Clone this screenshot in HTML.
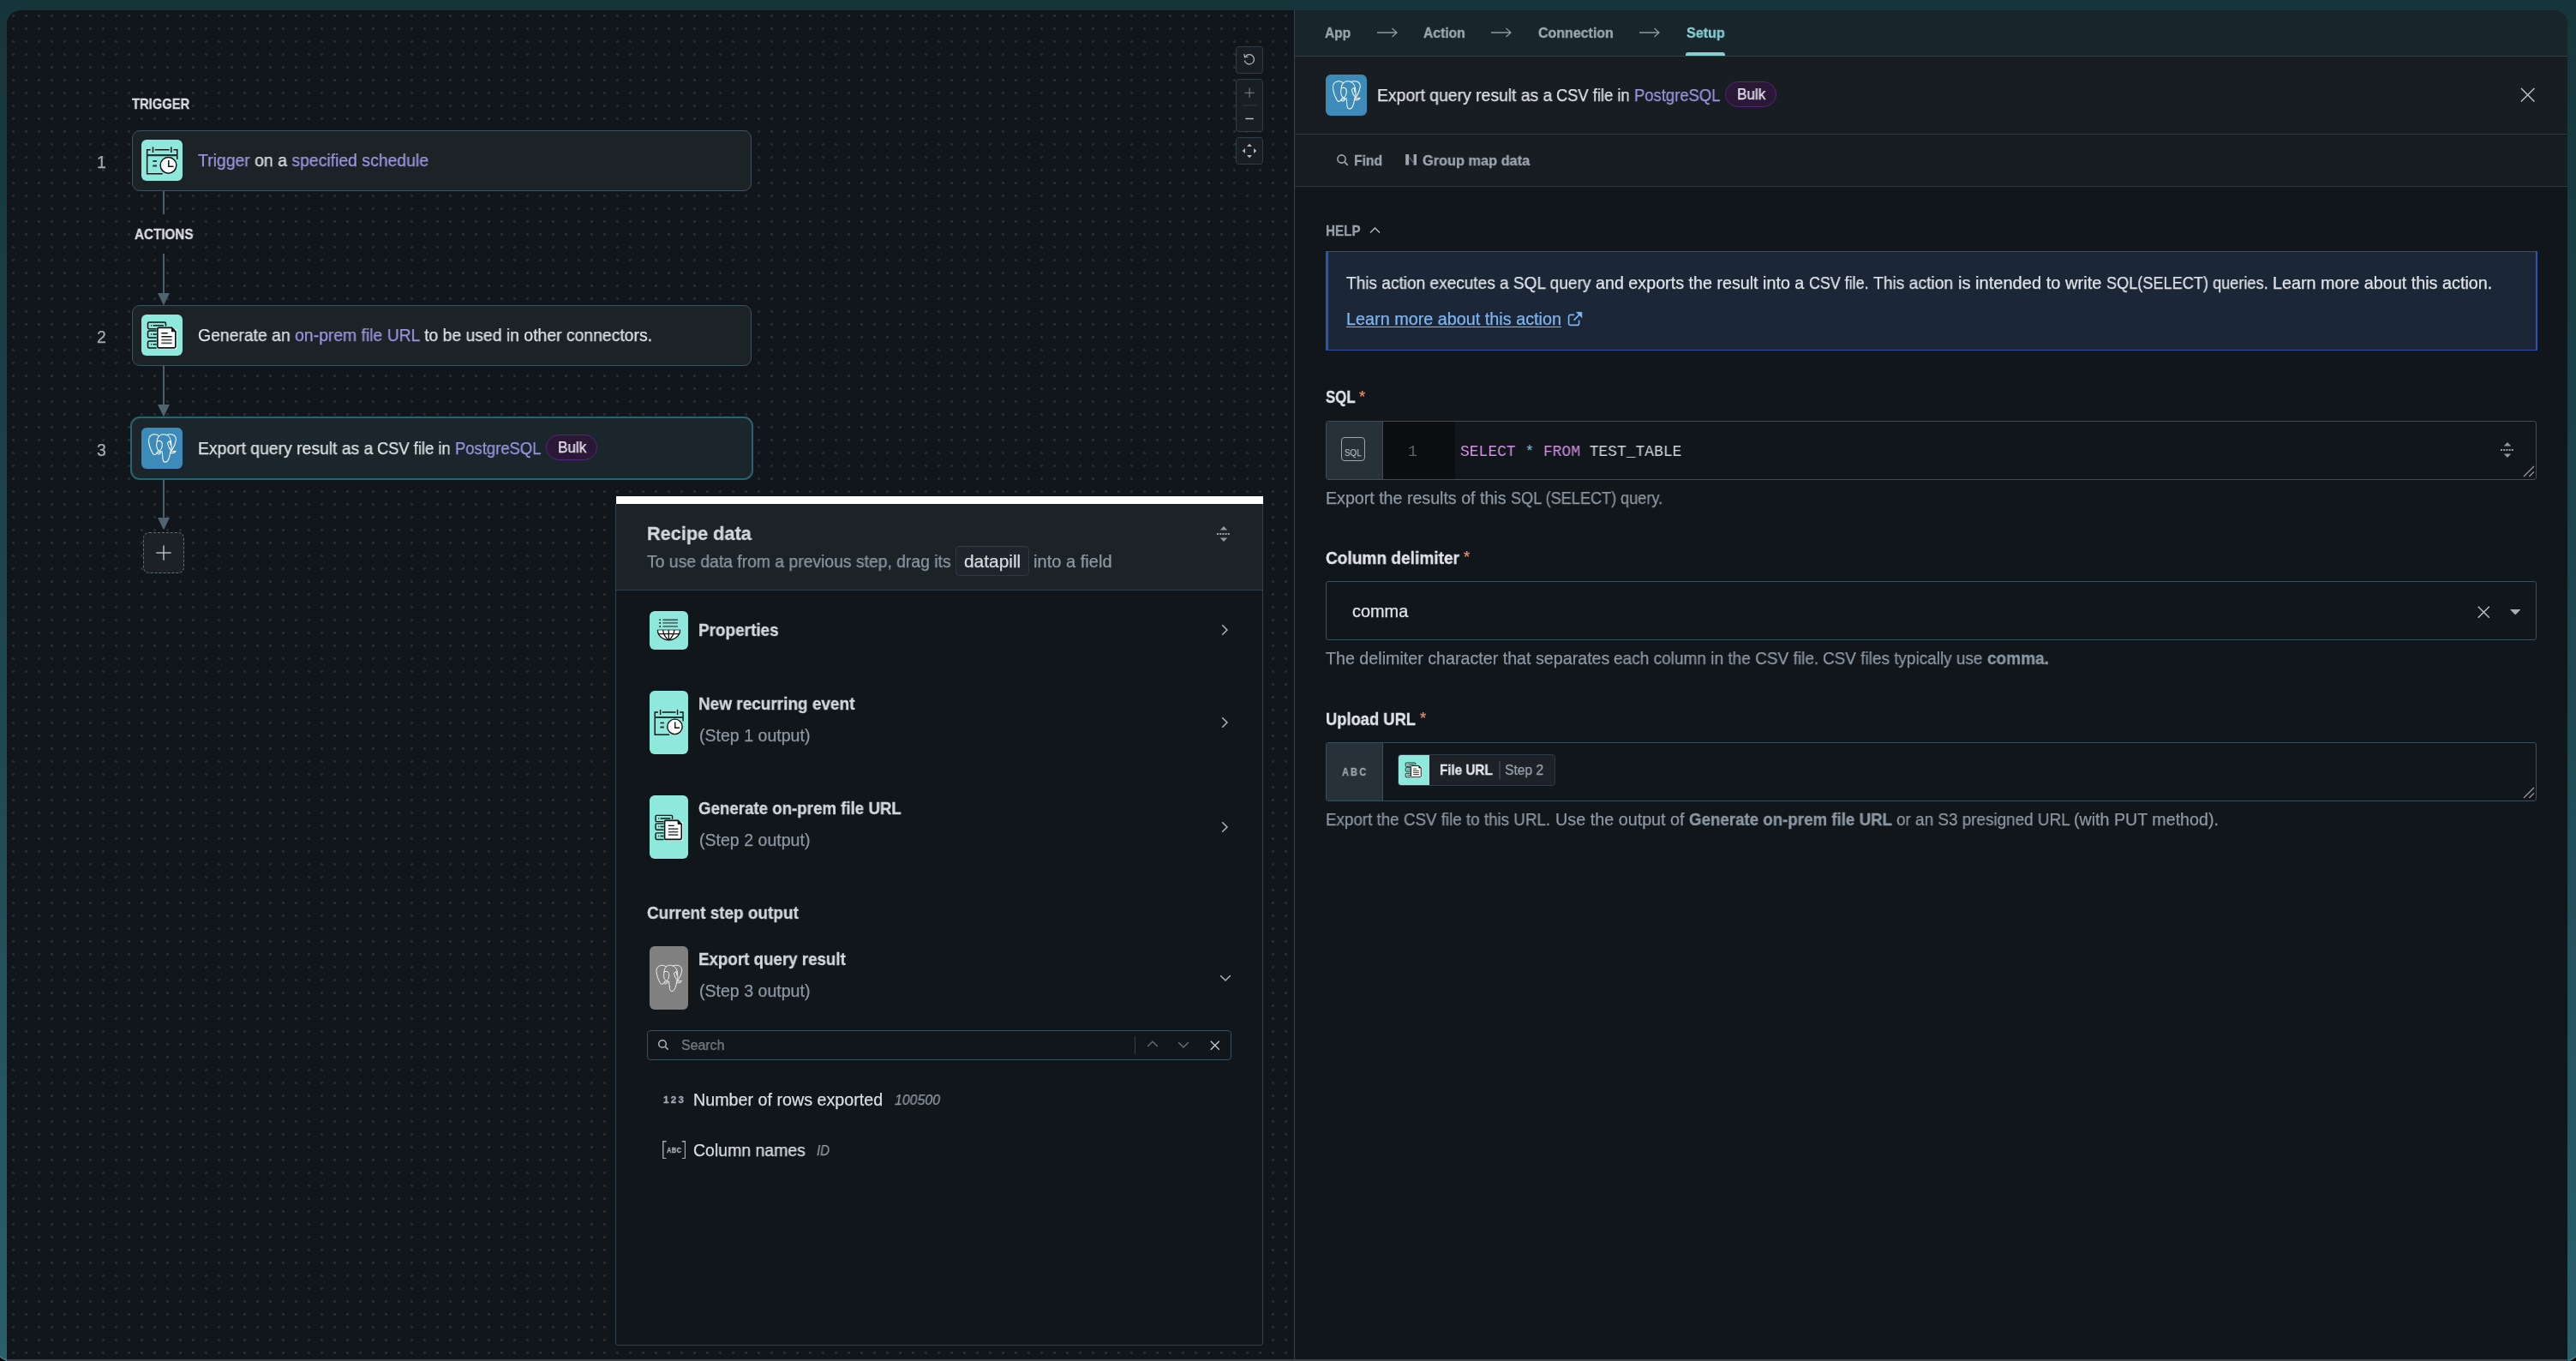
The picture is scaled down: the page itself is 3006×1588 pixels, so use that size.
<!DOCTYPE html>
<html lang="en"><head><meta charset="utf-8"><title>Recipe editor</title>
<style>
html,body{margin:0;padding:0}
body{width:3006px;height:1588px;overflow:hidden;position:relative;background:linear-gradient(180deg,#16353b 0%,#1f474f 50%,#2a5f6c 100%);font-family:"Liberation Sans", sans-serif;-webkit-font-smoothing:antialiased}
.app{position:absolute;left:8px;top:12px;width:2988px;height:1576px;border-radius:16px 16px 0 0;overflow:hidden;background-color:#11161a;
background-image:radial-gradient(circle at 7.5px 6.5px,#2a2e32 0,#2a2e32 1.15px,rgba(42,46,50,0) 1.9px);background-size:15px 15px;}
.app>div{position:absolute}
.t{position:absolute;line-height:0;white-space:nowrap;transform-origin:0 0;display:block;will-change:transform;-webkit-text-stroke:.25px}
.t.m{font-family:"Liberation Mono", monospace;-webkit-text-stroke:0}
.t b{font-weight:700;-webkit-text-stroke:.3px}
.t.b{-webkit-text-stroke:.3px}
svg{display:block}
.foot{position:absolute;left:8px;top:1586px;width:2988px;height:2px;background:#3d4246}
</style></head>
<body>
<div class="app"><div class="canvas" style="position:absolute;left:0.0px;top:0.0px;width:1502.0px;height:1574.0px;overflow:hidden;"><div style="position:absolute;left:182.0px;top:210.0px;width:2.0px;height:28.0px;background:#4b5e6b"></div><div style="position:absolute;left:182.0px;top:284.0px;width:2.0px;height:46.0px;background:#4b5e6b"></div><div style="position:absolute;left:182.0px;top:414.0px;width:2.0px;height:46.0px;background:#4b5e6b"></div><div style="position:absolute;left:182.0px;top:547.0px;width:2.0px;height:45.0px;background:#4b5e6b"></div><div style="position:absolute;left:175.8px;top:329.5px;width:14.0px;height:14.5px;"><svg viewBox="0 0 14 14.5" width="14" height="14.5"><path d="M0 0H14L7 14.5Z" fill="#4f6371"/></svg></div><div style="position:absolute;left:175.8px;top:459.5px;width:14.0px;height:14.5px;"><svg viewBox="0 0 14 14.5" width="14" height="14.5"><path d="M0 0H14L7 14.5Z" fill="#4f6371"/></svg></div><div style="position:absolute;left:175.8px;top:591.5px;width:14.0px;height:14.5px;"><svg viewBox="0 0 14 14.5" width="14" height="14.5"><path d="M0 0H14L7 14.5Z" fill="#4f6371"/></svg></div><span class="t b" style="left:146.3px;top:109.8px;font-size:16.74px;font-weight:700;color:#d9dde2;transform:scaleX(0.8813);">TRIGGER</span><span class="t b" style="left:148.7px;top:261.8px;font-size:16.74px;font-weight:700;color:#d9dde2;transform:scaleX(0.9095);">ACTIONS</span><span class="t" style="left:105.2px;top:176.8px;font-size:19.53px;font-weight:400;color:#a3abb3;">1</span><span class="t" style="left:104.6px;top:381.2px;font-size:19.53px;font-weight:400;color:#a3abb3;">2</span><span class="t" style="left:104.8px;top:512.6px;font-size:19.53px;font-weight:400;color:#a3abb3;">3</span><div class="card" style="position:absolute;left:146.0px;top:140.0px;width:722.6px;height:70.5px;background:#1c2327;border:1px solid #40525f;border-radius:9px;box-sizing:border-box;"></div><div style="position:absolute;left:157.0px;top:151.0px;width:48.3px;height:48.3px;background:#8ee8dc;border-radius:6px;overflow:hidden"><svg viewBox="0 0 48 48" width="100%" height="100%" fill="none" stroke="#101313" stroke-width="1.5" stroke-linecap="butt"><path d="M10.6 11.7H6.6V39.6H24.5M15.6 11.7H32.4M37.3 11.7H41.5V22.8"/><path d="M13.4 8.5V15M34.6 8.5V15"/><path d="M6.6 18.1H41.5" stroke="#1d3632" stroke-width="2.2"/><path d="M13.2 24.9H17.9" /><path d="M13.2 30.3H17.9" stroke="#1d3632" stroke-width="2"/><circle cx="31.3" cy="29.6" r="9.3" fill="#fff"/><path d="M31.6 23.8V31H37.3"/></svg></div><span class="t" style="left:223.4px;top:174.8px;font-size:19.53px;font-weight:400;color:#dde1e6;transform:scaleX(0.9945);"><span style="color:#9a97e3">Trigger</span> on a <span style="color:#9a97e3">specified schedule</span></span><div class="card" style="position:absolute;left:146.0px;top:344.0px;width:722.6px;height:70.5px;background:#1c2327;border:1px solid #40525f;border-radius:9px;box-sizing:border-box;"></div><div style="position:absolute;left:157.0px;top:354.8px;width:48.3px;height:48.3px;background:#8ee8dc;border-radius:6px;overflow:hidden"><svg viewBox="0 0 48 48" width="100%" height="100%" fill="none" stroke="#101313" stroke-width="1.5"><path d="M17.5 16.6H9A1.5 1.5 0 0 1 7.5 15.1V10.4A1.5 1.5 0 0 1 9 8.9H26.8A1.5 1.5 0 0 1 28.3 10.4V13.5"/><path d="M13.4 12.7H25.8M10.9 12.7H11.9"/><path d="M17.5 19H9A1.5 1.5 0 0 0 7.5 20.5V25.3A1.5 1.5 0 0 0 9 26.8H17.5"/><path d="M13.4 22.9H17.5M10.9 22.9H11.9"/><path d="M17.5 30.7H9A1.5 1.5 0 0 0 7.5 32.2V37.3A1.5 1.5 0 0 0 9 38.8H17.5"/><path d="M13.4 34.6H17.5M10.9 34.6H11.9"/><rect x="21" y="17" width="20.2" height="23" fill="#fff" stroke="none"/><path d="M20.2 15.3H35.2L39.6 19.7V37.1A1.5 1.5 0 0 1 38.1 38.6H20.2A1.5 1.5 0 0 1 18.7 37.1V16.8A1.5 1.5 0 0 1 20.2 15.3Z" fill="#fff" stroke-width="1.7"/><path d="M35.2 15.3V19.7H39.6Z" fill="#101313" stroke-width="1"/><path d="M23.2 21.6H30.5M23.2 25.6H35.4"/><path d="M23.2 29.4H35.4M23.2 33.1H35.4" stroke="#555" stroke-width="1.8"/></svg></div><span class="t" style="left:223.4px;top:379.0px;font-size:19.53px;font-weight:400;color:#dde1e6;transform:scaleX(0.9923);">Generate an <span style="color:#9a97e3">on-prem file URL</span> to be used in other connectors.</span><div class="card sel" style="position:absolute;left:144.3px;top:473.5px;width:726.3px;height:74.0px;background:#1a262b;border:2.6px solid #276470;border-radius:11px;box-sizing:border-box;"></div><div style="position:absolute;left:157.0px;top:486.9px;width:48.3px;height:48.3px;background:#3d8bb9;border-radius:6px;overflow:hidden"><svg viewBox="0 0 48 48" width="100%" height="100%" fill="none" stroke="#fff" stroke-width="1.05" stroke-linecap="round" stroke-linejoin="round"><g transform="translate(0.49 0.45) scale(0.966)"><path d="M20.6 9.4C18.6 7.8 16.4 7.3 14.4 7.6C10.2 8.3 8 11.5 8.3 15.6C8.7 20.6 10.6 26.2 13.2 30.4C14.4 32.3 15.9 32.2 17 31.2L19.2 28.2"/><path d="M18.3 16C18.3 11 21.3 7.6 25.5 7.5C30.5 7.4 34.2 10.8 35 15.8C35.6 19.6 35.8 23 35.6 26.3L34.1 29.4C33.6 32 33.4 34.6 32.4 36.6C31.4 39.2 29.8 40.9 28 40.9C26.4 40.9 25.6 39.4 25.3 37.4C24.9 34.6 24.9 31.8 24.4 29.2"/><path d="M18.3 15.8C20 15.2 22.3 15.3 23.6 16.4C24.6 17.6 24.6 20.2 24.2 22.6C23.8 24.9 22.6 26.6 21.4 27.4C20.2 27.2 18.8 25.8 18.2 24C17.6 21.6 17.6 18.2 18.3 15.8Z"/><path d="M19 28.6C20.2 29.2 21.6 29.3 22.8 29C22.4 30.4 21.4 31.3 20 31.4C19 31.4 18.2 30.8 18 30"/><path d="M21.4 27.4C22.6 28.4 23.8 28.6 24.6 28.2"/><path d="M29.4 8.4C31.6 7.4 34.2 7.2 36.6 7.8C39.8 8.8 41.4 11.6 40.9 14.8C40.3 19 38.4 23 36.2 26.6"/><path d="M34.8 15.6C33 15.6 31.4 16.6 30.8 18C31.4 21.2 32.8 24.2 34.8 26.6"/><path d="M33.6 16.4C34.4 17.6 34.6 19 34.4 20.4"/><path d="M34.6 27.8C36.6 28.2 38.8 28.1 40.8 27.6C40.2 29 38.6 30 36.8 30.2C35.6 30.3 34.6 30 33.9 29.4"/></g></svg></div><span class="t" style="left:223.2px;top:510.8px;font-size:19.53px;font-weight:400;color:#dde1e6;transform:scaleX(0.9917);">Export query result as a</span><span class="t" style="left:432.2px;top:510.8px;font-size:19.53px;font-weight:400;color:#dde1e6;transform:scaleX(0.9395);">CSV file in</span><span class="t" style="left:523.0px;top:510.8px;font-size:19.53px;font-weight:400;color:#9a97e3;transform:scaleX(0.9444);">PostgreSQL</span><div class="pill" style="position:absolute;left:629.0px;top:495.0px;width:60.0px;height:30.0px;background:#2a1836;border:1px solid #54267a;border-radius:15px;box-sizing:border-box;"></div><span class="t" style="left:642.8px;top:510.1px;font-size:17.67px;font-weight:400;color:#e6e0ee;transform:scaleX(0.9721);">Bulk</span><div style="position:absolute;left:159.4px;top:609.0px;width:47.8px;height:47.8px;background:#1b2125;border:1px dashed #5b6f7d;border-radius:7px;box-sizing:border-box;"><svg viewBox="0 0 48 48" width="46" height="46"><path d="M24 15V33M15 24H33" stroke="#b3bac1" stroke-width="1.6" fill="none"/></svg></div><div style="position:absolute;left:1434.0px;top:42.0px;width:32.2px;height:32.0px;background:#181e22;border:1px solid #2f3f49;border-radius:4px;box-sizing:border-box;"><svg viewBox="0 0 32 32" width="30" height="30" style="position:absolute;left:0;top:0"><path d="M11.2 11.4A6 6 0 1 1 10 16.6" stroke="#b5bcc3" stroke-width="1.3" fill="none"/><path d="M9.6 8.6L10.2 12.6L14.2 12" stroke="#b5bcc3" stroke-width="1.3" fill="none"/></svg></div><div style="position:absolute;left:1434.0px;top:80.2px;width:32.2px;height:61.8px;background:#181e22;border:1px solid #2f3f49;border-radius:4px;box-sizing:border-box;"><svg viewBox="0 0 32 62" width="30.2" height="59.8" style="position:absolute;left:0;top:0"><path d="M16 9.5V21.5M10 15.5H22" stroke="#69747d" stroke-width="1.3" fill="none"/><path d="M7 31H25" stroke="#333f48" stroke-width="1"/><path d="M11 47.6H21" stroke="#b5bcc3" stroke-width="1.5" fill="none"/></svg></div><div style="position:absolute;left:1434.0px;top:148.2px;width:32.2px;height:32.0px;background:#181e22;border:1px solid #2f3f49;border-radius:4px;box-sizing:border-box;"><svg viewBox="0 0 32 32" width="30" height="30" style="position:absolute;left:0;top:0" fill="#b5bcc3"><path d="M16 7.2L19.2 10.6H12.8Z"/><path d="M16 24.8L19.2 21.4H12.8Z"/><path d="M7.2 16L10.6 12.8V19.2Z"/><path d="M24.8 16L21.4 12.8V19.2Z"/></svg></div><div class="recipe-data" style="position:absolute;left:710.0px;top:567.0px;width:756.0px;height:991.0px;background:#11161a;border-radius:0 0 4px 4px;"><div style="position:absolute;left:0.0px;top:9.0px;width:756.0px;height:982.0px;border:1px solid #33434d;border-top:none;border-radius:0 0 4px 4px;box-sizing:border-box;"></div><div style="position:absolute;left:1.0px;top:0.0px;width:754.6px;height:9.2px;background:#fff"></div><div class="rd-head" style="position:absolute;left:0.0px;top:9.0px;width:756.0px;height:101.0px;background:#1c2327;border-left:1px solid #33434d;border-right:1px solid #33434d;border-bottom:1px solid #2f3e48;box-sizing:border-box;"></div><span class="t b" style="left:37.4px;top:44.1px;font-size:22.32px;font-weight:700;color:#d3d8df;transform:scaleX(0.9725);">Recipe data</span><span class="t" style="left:37.4px;top:76.2px;font-size:19.53px;font-weight:400;color:#8b98a3;transform:scaleX(0.9905);">To use data from a previous step, drag its</span><div style="position:absolute;left:397.4px;top:58.2px;width:85.8px;height:34.4px;background:#1f252d;border:1px solid #2d3943;border-radius:4px;box-sizing:border-box;"></div><span class="t" style="left:406.8px;top:76.2px;font-size:19.53px;font-weight:400;color:#d5dae0;transform:scaleX(1.0702);">datapill</span><span class="t" style="left:488.2px;top:76.2px;font-size:19.53px;font-weight:400;color:#8b98a3;transform:scaleX(1.0296);">into a field</span><div style="position:absolute;left:701.0px;top:34.0px;width:18.0px;height:20.0px;"><svg viewBox="0 0 18 20" width="18" height="20"><path d="M9 1L13.2 5.4H4.8Z" fill="#8f9aa3"/><path d="M9 19L13.2 14.6H4.8Z" fill="#8f9aa3"/><path d="M1 10H17" stroke="#c9ced3" stroke-width="1.6" stroke-dasharray="2 1.2"/></svg></div><div style="position:absolute;left:39.9px;top:133.8px;width:45.2px;height:45.3px;background:#8ee8dc;border-radius:6px;overflow:hidden"><svg viewBox="0 0 45 45" width="100%" height="100%" fill="none" stroke="#101313" stroke-width="1.3"><path d="M11.3 10.1H12.9M11.3 13.8H12.9M11.3 17.7H12.9" stroke-width="1.6"/><path d="M15.3 10.1H32.8" stroke="#456b66" stroke-width="2"/><path d="M15.3 13.8H32.8M15.3 17.7H32.8" stroke="#2a4743" stroke-width="1.15"/><path d="M9.4 21.8H35.4A13 11.8 0 0 1 9.4 21.8Z" fill="#fff" stroke="none"/><path d="M35.4 21.8A13 11.8 0 0 1 9.4 21.8"/><path d="M9.2 21.8H35.6" stroke="#35524e" stroke-width="1.1"/><path d="M10.4 26.4H34.4M22.2 21.8V33.5"/><path d="M15.6 21.8C16 26.8 18.6 31 22.2 33.5M28.8 21.8C28.4 26.8 25.8 31 22.2 33.5"/></svg></div><span class="t b" style="left:97.2px;top:156.4px;font-size:19.53px;font-weight:700;color:#d3d8df;transform:scaleX(0.9696);">Properties</span><div style="position:absolute;left:706.4px;top:149.0px;width:10.0px;height:14.0px;"><svg viewBox="0 0 10 14" width="10" height="14"><path d="M2.2 1.2L8 7L2.2 12.8" stroke="#aab2ba" stroke-width="1.5" fill="none"/></svg></div><div style="position:absolute;left:39.9px;top:226.8px;width:45.2px;height:74.4px;background:#8ee8dc;border-radius:6px;overflow:hidden"><div style="position:absolute;left:0;top:14.5px;width:45.2px;height:45.2px"><svg viewBox="0 0 48 48" width="100%" height="100%" fill="none" stroke="#101313" stroke-width="1.5" stroke-linecap="butt"><path d="M10.6 11.7H6.6V39.6H24.5M15.6 11.7H32.4M37.3 11.7H41.5V22.8"/><path d="M13.4 8.5V15M34.6 8.5V15"/><path d="M6.6 18.1H41.5" stroke="#1d3632" stroke-width="2.2"/><path d="M13.2 24.9H17.9" /><path d="M13.2 30.3H17.9" stroke="#1d3632" stroke-width="2"/><circle cx="31.3" cy="29.6" r="9.3" fill="#fff"/><path d="M31.6 23.8V31H37.3"/></svg></div></div><span class="t b" style="left:97.2px;top:242.0px;font-size:19.53px;font-weight:700;color:#d3d8df;transform:scaleX(0.9721);">New recurring event</span><span class="t" style="left:98.2px;top:279.4px;font-size:19.53px;font-weight:400;color:#8b98a3;transform:scaleX(1.0023);">(Step 1 output)</span><div style="position:absolute;left:706.4px;top:256.5px;width:10.0px;height:14.0px;"><svg viewBox="0 0 10 14" width="10" height="14"><path d="M2.2 1.2L8 7L2.2 12.8" stroke="#aab2ba" stroke-width="1.5" fill="none"/></svg></div><div style="position:absolute;left:39.9px;top:349.2px;width:45.2px;height:73.8px;background:#8ee8dc;border-radius:6px;overflow:hidden"><div style="position:absolute;left:0;top:14.5px;width:45.2px;height:45.2px"><svg viewBox="0 0 48 48" width="100%" height="100%" fill="none" stroke="#101313" stroke-width="1.5"><path d="M17.5 16.6H9A1.5 1.5 0 0 1 7.5 15.1V10.4A1.5 1.5 0 0 1 9 8.9H26.8A1.5 1.5 0 0 1 28.3 10.4V13.5"/><path d="M13.4 12.7H25.8M10.9 12.7H11.9"/><path d="M17.5 19H9A1.5 1.5 0 0 0 7.5 20.5V25.3A1.5 1.5 0 0 0 9 26.8H17.5"/><path d="M13.4 22.9H17.5M10.9 22.9H11.9"/><path d="M17.5 30.7H9A1.5 1.5 0 0 0 7.5 32.2V37.3A1.5 1.5 0 0 0 9 38.8H17.5"/><path d="M13.4 34.6H17.5M10.9 34.6H11.9"/><rect x="21" y="17" width="20.2" height="23" fill="#fff" stroke="none"/><path d="M20.2 15.3H35.2L39.6 19.7V37.1A1.5 1.5 0 0 1 38.1 38.6H20.2A1.5 1.5 0 0 1 18.7 37.1V16.8A1.5 1.5 0 0 1 20.2 15.3Z" fill="#fff" stroke-width="1.7"/><path d="M35.2 15.3V19.7H39.6Z" fill="#101313" stroke-width="1"/><path d="M23.2 21.6H30.5M23.2 25.6H35.4"/><path d="M23.2 29.4H35.4M23.2 33.1H35.4" stroke="#555" stroke-width="1.8"/></svg></div></div><span class="t b" style="left:97.2px;top:364.4px;font-size:19.53px;font-weight:700;color:#d3d8df;transform:scaleX(0.9577);">Generate on-prem file URL</span><span class="t" style="left:98.2px;top:400.8px;font-size:19.53px;font-weight:400;color:#8b98a3;transform:scaleX(1.0023);">(Step 2 output)</span><div style="position:absolute;left:706.4px;top:378.5px;width:10.0px;height:14.0px;"><svg viewBox="0 0 10 14" width="10" height="14"><path d="M2.2 1.2L8 7L2.2 12.8" stroke="#aab2ba" stroke-width="1.5" fill="none"/></svg></div><span class="t b" style="left:37.2px;top:486.4px;font-size:19.53px;font-weight:700;color:#d3d8df;transform:scaleX(0.9707);">Current step output</span><div style="position:absolute;left:39.9px;top:525.0px;width:45.2px;height:74.2px;background:#808080;border-radius:6px;overflow:hidden"><div style="position:absolute;left:0;top:14.5px;width:45.2px;height:45.2px"><svg viewBox="0 0 48 48" width="100%" height="100%" fill="none" stroke="#f4f4f4" stroke-width="1.05" stroke-linecap="round" stroke-linejoin="round"><g transform="translate(0.49 0.45) scale(0.966)"><path d="M20.6 9.4C18.6 7.8 16.4 7.3 14.4 7.6C10.2 8.3 8 11.5 8.3 15.6C8.7 20.6 10.6 26.2 13.2 30.4C14.4 32.3 15.9 32.2 17 31.2L19.2 28.2"/><path d="M18.3 16C18.3 11 21.3 7.6 25.5 7.5C30.5 7.4 34.2 10.8 35 15.8C35.6 19.6 35.8 23 35.6 26.3L34.1 29.4C33.6 32 33.4 34.6 32.4 36.6C31.4 39.2 29.8 40.9 28 40.9C26.4 40.9 25.6 39.4 25.3 37.4C24.9 34.6 24.9 31.8 24.4 29.2"/><path d="M18.3 15.8C20 15.2 22.3 15.3 23.6 16.4C24.6 17.6 24.6 20.2 24.2 22.6C23.8 24.9 22.6 26.6 21.4 27.4C20.2 27.2 18.8 25.8 18.2 24C17.6 21.6 17.6 18.2 18.3 15.8Z"/><path d="M19 28.6C20.2 29.2 21.6 29.3 22.8 29C22.4 30.4 21.4 31.3 20 31.4C19 31.4 18.2 30.8 18 30"/><path d="M21.4 27.4C22.6 28.4 23.8 28.6 24.6 28.2"/><path d="M29.4 8.4C31.6 7.4 34.2 7.2 36.6 7.8C39.8 8.8 41.4 11.6 40.9 14.8C40.3 19 38.4 23 36.2 26.6"/><path d="M34.8 15.6C33 15.6 31.4 16.6 30.8 18C31.4 21.2 32.8 24.2 34.8 26.6"/><path d="M33.6 16.4C34.4 17.6 34.6 19 34.4 20.4"/><path d="M34.6 27.8C36.6 28.2 38.8 28.1 40.8 27.6C40.2 29 38.6 30 36.8 30.2C35.6 30.3 34.6 30 33.9 29.4"/></g></svg></div></div><span class="t b" style="left:97.2px;top:539.6px;font-size:19.53px;font-weight:700;color:#d3d8df;transform:scaleX(0.9600);">Export query result</span><span class="t" style="left:98.2px;top:577.2px;font-size:19.53px;font-weight:400;color:#8b98a3;transform:scaleX(1.0023);">(Step 3 output)</span><div style="position:absolute;left:705.2px;top:557.4px;width:14.0px;height:10.0px;"><svg viewBox="0 0 14 10" width="14" height="10"><path d="M1.2 2.2L7 8L12.8 2.2" stroke="#aab2ba" stroke-width="1.5" fill="none"/></svg></div><div class="search" style="position:absolute;left:37.0px;top:623.2px;width:682.0px;height:34.6px;border:1px solid #3c4f5c;border-radius:4px;box-sizing:border-box;background:#11161a"></div><div style="position:absolute;left:49.0px;top:632.6px;width:14.0px;height:14.0px;"><svg viewBox="0 0 14 14" width="14" height="14"><circle cx="6" cy="6" r="4.3" stroke="#aeb6bd" stroke-width="1.5" fill="none"/><path d="M9.2 9.2L12.6 12.6" stroke="#aeb6bd" stroke-width="1.6"/></svg></div><span class="t" style="left:77.2px;top:640.0px;font-size:17.21px;font-weight:400;color:#7b7f83;transform:scaleX(0.9253);">Search</span><div style="position:absolute;left:605.6px;top:630.4px;width:1.6px;height:21.0px;background:#36434c"></div><div style="position:absolute;left:619.5px;top:634.4px;width:14.0px;height:10.0px;"><svg viewBox="0 0 14 10" width="14" height="10"><path d="M1.2 8L7 2.2L12.8 8" stroke="#656d74" stroke-width="1.5" fill="none"/></svg></div><div style="position:absolute;left:656.0px;top:635.4px;width:14.0px;height:10.0px;"><svg viewBox="0 0 14 10" width="14" height="10"><path d="M1.2 2.2L7 8L12.8 2.2" stroke="#656d74" stroke-width="1.5" fill="none"/></svg></div><div style="position:absolute;left:693.6px;top:635.4px;width:11.6px;height:11.6px;"><svg viewBox="0 0 12 12" width="11.6" height="11.6"><path d="M0.8 0.8L11.2 11.2M11.2 0.8L0.8 11.2" stroke="#c6cbd0" stroke-width="1.4" fill="none"/></svg></div><span class="t b" style="left:55.6px;top:703.9px;font-size:11.72px;font-weight:700;color:#a0abb4;transform:scaleX(0.9940);letter-spacing:2.2px;">123</span><span class="t" style="left:90.8px;top:703.8px;font-size:19.53px;font-weight:400;color:#dadfe4;transform:scaleX(1.0095);">Number of rows exported</span><span class="t" style="left:325.6px;top:704.2px;font-size:16.28px;font-weight:400;color:#8b98a3;font-style:italic;transform:scaleX(0.9764);">100500</span><div style="position:absolute;left:55.0px;top:752.0px;width:27.4px;height:21.4px;"><svg viewBox="0 0 27.4 21.4" width="27.4" height="21.4"><path d="M4.6 0.7H0.8V20.7H4.6M22.8 0.7H26.6V20.7H22.8" stroke="#a0abb4" stroke-width="1.4" fill="none"/></svg></div><span class="t b" style="left:60.0px;top:762.5px;font-size:8.93px;font-weight:700;color:#a0abb4;transform:scaleX(0.8599);letter-spacing:0.3px;">ABC</span><span class="t" style="left:90.8px;top:762.8px;font-size:19.53px;font-weight:400;color:#dadfe4;transform:scaleX(0.9966);">Column names</span><span class="t" style="left:234.8px;top:763.2px;font-size:16.28px;font-weight:400;color:#8b98a3;font-style:italic;transform:scaleX(0.9213);">ID</span></div></div><div class="panel" style="position:absolute;left:1502.0px;top:0.0px;width:1486.0px;height:1574.0px;overflow:hidden;border-radius:0 16px 0 0;"><div class="tabs" style="position:absolute;left:0.0px;top:0.0px;width:1486.0px;height:54.0px;background:#18252b;border-bottom:1px solid #1f4852;border-left:1px solid #34434d;box-sizing:border-box;"></div><span class="t b" style="left:36.4px;top:26.7px;font-size:16.74px;font-weight:700;color:#9fa9b2;transform:scaleX(0.9283);">App</span><div style="position:absolute;left:97.0px;top:20.0px;width:24.0px;height:12.0px;"><svg viewBox="0 0 24 12" width="24" height="12"><path d="M0 6H23M17.5 1L23 6L17.5 11" stroke="#8d98a1" stroke-width="1.3" fill="none"/></svg></div><span class="t b" style="left:151.0px;top:26.7px;font-size:16.74px;font-weight:700;color:#9fa9b2;transform:scaleX(0.9373);">Action</span><div style="position:absolute;left:230.0px;top:20.0px;width:24.0px;height:12.0px;"><svg viewBox="0 0 24 12" width="24" height="12"><path d="M0 6H23M17.5 1L23 6L17.5 11" stroke="#8d98a1" stroke-width="1.3" fill="none"/></svg></div><span class="t b" style="left:284.8px;top:26.7px;font-size:16.74px;font-weight:700;color:#9fa9b2;transform:scaleX(0.9540);">Connection</span><div style="position:absolute;left:403.0px;top:20.0px;width:24.0px;height:12.0px;"><svg viewBox="0 0 24 12" width="24" height="12"><path d="M0 6H23M17.5 1L23 6L17.5 11" stroke="#8d98a1" stroke-width="1.3" fill="none"/></svg></div><span class="t b" style="left:457.6px;top:26.7px;font-size:16.74px;font-weight:700;color:#86cfd3;transform:scaleX(0.9634);">Setup</span><div style="position:absolute;left:457.0px;top:49.4px;width:45.6px;height:3.6px;background:#86cfd3;border-radius:3px 3px 0 0"></div><div class="hdr" style="position:absolute;left:0.0px;top:54.0px;width:1486.0px;height:91.0px;background:#181d22;border-bottom:1px solid #2a3841;border-left:1px solid #34434d;box-sizing:border-box;"></div><div style="position:absolute;left:37.0px;top:75.0px;width:48.2px;height:48.2px;background:#3d8bb9;border-radius:6px;overflow:hidden"><svg viewBox="0 0 48 48" width="100%" height="100%" fill="none" stroke="#fff" stroke-width="1.05" stroke-linecap="round" stroke-linejoin="round"><g transform="translate(0.49 0.45) scale(0.966)"><path d="M20.6 9.4C18.6 7.8 16.4 7.3 14.4 7.6C10.2 8.3 8 11.5 8.3 15.6C8.7 20.6 10.6 26.2 13.2 30.4C14.4 32.3 15.9 32.2 17 31.2L19.2 28.2"/><path d="M18.3 16C18.3 11 21.3 7.6 25.5 7.5C30.5 7.4 34.2 10.8 35 15.8C35.6 19.6 35.8 23 35.6 26.3L34.1 29.4C33.6 32 33.4 34.6 32.4 36.6C31.4 39.2 29.8 40.9 28 40.9C26.4 40.9 25.6 39.4 25.3 37.4C24.9 34.6 24.9 31.8 24.4 29.2"/><path d="M18.3 15.8C20 15.2 22.3 15.3 23.6 16.4C24.6 17.6 24.6 20.2 24.2 22.6C23.8 24.9 22.6 26.6 21.4 27.4C20.2 27.2 18.8 25.8 18.2 24C17.6 21.6 17.6 18.2 18.3 15.8Z"/><path d="M19 28.6C20.2 29.2 21.6 29.3 22.8 29C22.4 30.4 21.4 31.3 20 31.4C19 31.4 18.2 30.8 18 30"/><path d="M21.4 27.4C22.6 28.4 23.8 28.6 24.6 28.2"/><path d="M29.4 8.4C31.6 7.4 34.2 7.2 36.6 7.8C39.8 8.8 41.4 11.6 40.9 14.8C40.3 19 38.4 23 36.2 26.6"/><path d="M34.8 15.6C33 15.6 31.4 16.6 30.8 18C31.4 21.2 32.8 24.2 34.8 26.6"/><path d="M33.6 16.4C34.4 17.6 34.6 19 34.4 20.4"/><path d="M34.6 27.8C36.6 28.2 38.8 28.1 40.8 27.6C40.2 29 38.6 30 36.8 30.2C35.6 30.3 34.6 30 33.9 29.4"/></g></svg></div><span class="t" style="left:97.0px;top:99.4px;font-size:19.53px;font-weight:400;color:#dde1e6;transform:scaleX(0.9917);">Export query result as a</span><span class="t" style="left:306.0px;top:99.4px;font-size:19.53px;font-weight:400;color:#dde1e6;transform:scaleX(0.9395);">CSV file in</span><span class="t" style="left:396.8px;top:99.4px;font-size:19.53px;font-weight:400;color:#9a97e3;transform:scaleX(0.9444);">PostgreSQL</span><div class="pill" style="position:absolute;left:503.0px;top:83.0px;width:60.0px;height:30.0px;background:#2a1836;border:1px solid #54267a;border-radius:15px;box-sizing:border-box;"></div><span class="t" style="left:516.8px;top:98.3px;font-size:17.67px;font-weight:400;color:#e6e0ee;transform:scaleX(0.9721);">Bulk</span><div style="position:absolute;left:1430.5px;top:90.0px;width:17.4px;height:17.4px;"><svg viewBox="0 0 18 18" width="17.4" height="17.4"><path d="M1 1L17 17M17 1L1 17" stroke="#b7bec6" stroke-width="1.6" fill="none"/></svg></div><div class="toolbar" style="position:absolute;left:0.0px;top:145.0px;width:1486.0px;height:61.0px;background:#181d22;border-bottom:1px solid #2a3841;border-left:1px solid #34434d;box-sizing:border-box;"></div><div style="position:absolute;left:49.0px;top:167.0px;width:15.0px;height:15.0px;"><svg viewBox="0 0 15 15" width="15" height="15"><circle cx="6.5" cy="6.5" r="4.6" stroke="#98a4ae" stroke-width="1.6" fill="none"/><path d="M9.9 9.9L13.8 13.8" stroke="#98a4ae" stroke-width="1.8"/></svg></div><span class="t b" style="left:69.8px;top:175.5px;font-size:16.74px;font-weight:700;color:#9aa5af;transform:scaleX(0.9398);">Find</span><div style="position:absolute;left:129.6px;top:168.2px;width:13.6px;height:12.6px;"><svg viewBox="0 0 13.6 12.6" width="13.6" height="12.6"><rect x="0.2" y="0" width="3.9" height="12.6" fill="#9aa5af"/><rect x="9.6" y="0" width="3.9" height="12.6" fill="#9aa5af"/><path d="M4.6 3.4L9 9.4" stroke="#9aa5af" stroke-width="0.8"/></svg></div><span class="t b" style="left:149.8px;top:175.5px;font-size:16.74px;font-weight:700;color:#9aa5af;transform:scaleX(0.9757);">Group map data</span><div class="body" style="position:absolute;left:0.0px;top:206.0px;width:1486.0px;height:1368.0px;background:#11161a;border-left:1px solid #34434d;box-sizing:border-box;"></div><span class="t b" style="left:37.4px;top:258.4px;font-size:16.74px;font-weight:700;color:#98a2ab;transform:scaleX(0.9095);">HELP</span><div style="position:absolute;left:87.6px;top:252.2px;width:13.0px;height:9.0px;"><svg viewBox="0 0 13 9" width="13" height="9"><path d="M1 7.6L6.5 2L12 7.6" stroke="#b4bbc2" stroke-width="1.4" fill="none"/></svg></div><div class="help" style="position:absolute;left:37.2px;top:280.8px;width:1413.4px;height:116.2px;background:#1b2636;border:1px solid #274fa0;border-left:3px solid #2956ae;border-right:2px solid #2956ae;box-sizing:border-box;"></div><span class="t" style="left:60.8px;top:317.8px;font-size:19.53px;font-weight:400;color:#dfe3e8;transform:scaleX(0.9768);">This action executes a SQL query</span><span class="t" style="left:352.2px;top:317.8px;font-size:19.53px;font-weight:400;color:#dfe3e8;transform:scaleX(1.0102);">and exports the result into a</span><span class="t" style="left:600.6px;top:317.8px;font-size:19.53px;font-weight:400;color:#dfe3e8;transform:scaleX(0.9154);">CSV file.</span><span class="t" style="left:676.0px;top:317.8px;font-size:19.53px;font-weight:400;color:#dfe3e8;transform:scaleX(0.9865);">This action</span><span class="t" style="left:775.2px;top:317.8px;font-size:19.53px;font-weight:400;color:#dfe3e8;transform:scaleX(1.0287);">is intended to write</span><span class="t" style="left:947.8px;top:317.8px;font-size:19.53px;font-weight:400;color:#dfe3e8;transform:scaleX(0.9299);">SQL(SELECT) queries.</span><span class="t" style="left:1141.6px;top:317.8px;font-size:19.53px;font-weight:400;color:#dfe3e8;transform:scaleX(1.0139);">Learn more about this action.</span><span class="t" style="left:61.0px;top:359.9px;font-size:19.53px;font-weight:400;color:#7fb5f1;transform:scaleX(1.0147);text-decoration:underline;text-decoration-thickness:1.2px;text-underline-offset:1.6px;">Learn more about this action</span><div style="position:absolute;left:319.0px;top:351.0px;width:18.0px;height:18.0px;"><svg viewBox="0 0 18 18" width="18" height="18" fill="none" stroke="#7fb5f1" stroke-width="1.6"><path d="M8.2 4.4H3.6A2 2 0 0 0 1.6 6.4V14.4A2 2 0 0 0 3.6 16.4H11.6A2 2 0 0 0 13.6 14.4V10.4"/><path d="M7.6 10.6L15.8 2.4"/><path d="M10.4 1.4H16.8V7.8" fill="#7fb5f1" stroke-width="1"/></svg></div><span class="t b" style="left:37.4px;top:451.3px;font-size:19.53px;font-weight:700;color:#e1e5e9;transform:scaleX(0.8623);">SQL</span><span class="t" style="left:75.8px;top:450.8px;font-size:18.6px;font-weight:400;color:#e98c70;">*</span><div class="field sql" style="position:absolute;left:37.2px;top:479.0px;width:1413.0px;height:69.0px;border:1px solid #3b4e5b;border-radius:3px;box-sizing:border-box;background:#11161a;overflow:hidden;"><div style="position:absolute;left:0;top:0;width:65.6px;height:67px;background:#263139;border-right:1px solid #3b4e5b;box-sizing:border-box"></div><div style="position:absolute;left:65.6px;top:0;width:84px;height:67px;background:#0a0e10"></div></div><div style="position:absolute;left:55.4px;top:498.2px;width:27.4px;height:27.6px;border:1.5px solid #9ba6af;border-radius:4px;box-sizing:border-box;"></div><span class="t" style="left:59.4px;top:515.7px;font-size:10.6px;font-weight:400;color:#aab4bc;transform:scaleX(0.9244);">SQL</span><span class="t m" style="left:133.0px;top:515.4px;font-size:18px;font-weight:400;color:#566773;">1</span><span class="t m" style="left:194.2px;top:515.4px;font-size:18px;font-weight:400;color:#d4d8dc;transform:scaleX(0.9965);"><span style="color:#d58fe6">SELECT</span> <span style="color:#7ccbf4">*</span> <span style="color:#d58fe6">FROM</span> TEST_TABLE</span><div style="position:absolute;left:1407.0px;top:503.0px;width:18.0px;height:20.0px;"><svg viewBox="0 0 18 20" width="18" height="20"><path d="M9 1L13.2 5.4H4.8Z" fill="#8f9aa3"/><path d="M9 19L13.2 14.6H4.8Z" fill="#8f9aa3"/><path d="M1 10H17" stroke="#c9ced3" stroke-width="1.6" stroke-dasharray="2 1.2"/></svg></div><div style="position:absolute;left:1433.6px;top:531.0px;width:14.0px;height:14.0px;"><svg viewBox="0 0 14 14" width="14" height="14"><path d="M1 13L13 1M7.4 13L13 7.4" stroke="#9c9c9c" stroke-width="1.3" fill="none"/></svg></div><span class="t" style="left:37.2px;top:569.0px;font-size:19.53px;font-weight:400;color:#8b98a3;transform:scaleX(1.0054);">Export the results of this</span><span class="t" style="left:253.2px;top:569.0px;font-size:19.53px;font-weight:400;color:#8b98a3;transform:scaleX(0.9278);">SQL (SELECT) query.</span><span class="t b" style="left:37.4px;top:639.0px;font-size:19.53px;font-weight:700;color:#e1e5e9;transform:scaleX(0.9786);">Column delimiter</span><span class="t" style="left:197.6px;top:638.4px;font-size:18.6px;font-weight:400;color:#e98c70;">*</span><div class="field select" style="position:absolute;left:37.2px;top:666.0px;width:1413.0px;height:69.0px;border:1px solid #3b4e5b;border-radius:3px;box-sizing:border-box;background:#11161a;"></div><span class="t" style="left:67.8px;top:700.8px;font-size:19.53px;font-weight:400;color:#dfe3e8;transform:scaleX(1.0190);">comma</span><div style="position:absolute;left:1381.4px;top:695.0px;width:14.6px;height:14.6px;"><svg viewBox="0 0 15 15" width="14.6" height="14.6"><path d="M0.8 0.8L14.2 14.2M14.2 0.8L0.8 14.2" stroke="#b9c0c7" stroke-width="1.5" fill="none"/></svg></div><div style="position:absolute;left:1419.0px;top:698.8px;width:12.4px;height:6.6px;"><svg viewBox="0 0 12.4 6.6" width="12.4" height="6.6"><path d="M0 0H12.4L6.2 6.6Z" fill="#a3adb6"/></svg></div><span class="t" style="left:37.2px;top:755.7px;font-size:19.53px;font-weight:400;color:#8b98a3;transform:scaleX(1.0083);">The delimiter character that separates</span><span class="t" style="left:373.4px;top:755.7px;font-size:19.53px;font-weight:400;color:#8b98a3;transform:scaleX(0.9757);">each column in the CSV file.</span><span class="t" style="left:617.4px;top:755.7px;font-size:19.53px;font-weight:400;color:#8b98a3;transform:scaleX(0.9714);">CSV files typically use</span><span class="t b" style="left:808.8px;top:755.7px;font-size:19.53px;font-weight:700;color:#8b98a3;transform:scaleX(0.9747);">comma.</span><span class="t b" style="left:37.4px;top:826.8px;font-size:19.53px;font-weight:700;color:#e1e5e9;transform:scaleX(0.9403);">Upload URL</span><span class="t" style="left:146.6px;top:826.4px;font-size:18.6px;font-weight:400;color:#e98c70;">*</span><div class="field url" style="position:absolute;left:37.2px;top:854.0px;width:1413.0px;height:69.0px;border:1px solid #3b4e5b;border-radius:3px;box-sizing:border-box;background:#11161a;overflow:hidden;"><div style="position:absolute;left:0;top:0;width:65.6px;height:67px;background:#263139;border-right:1px solid #3b4e5b;box-sizing:border-box"></div></div><span class="t b" style="left:55.6px;top:889.2px;font-size:12.09px;font-weight:700;color:#9ba6af;transform:scaleX(0.9109);letter-spacing:2.4px;">ABC</span><div class="datapill" style="position:absolute;left:121.4px;top:868.2px;width:183.4px;height:36.6px;background:#1c2228;border:1px solid #2e3a44;border-radius:4px;box-sizing:border-box;overflow:hidden;"><div style="position:absolute;left:-1px;top:-1px;width:36.4px;height:36.2px;background:#8ee8dc"><div style="position:absolute;left:4.6px;top:4.6px;width:27px;height:27px"><svg viewBox="0 0 48 48" width="100%" height="100%" fill="none" stroke="#101313" stroke-width="1.5"><path d="M17.5 16.6H9A1.5 1.5 0 0 1 7.5 15.1V10.4A1.5 1.5 0 0 1 9 8.9H26.8A1.5 1.5 0 0 1 28.3 10.4V13.5"/><path d="M13.4 12.7H25.8M10.9 12.7H11.9"/><path d="M17.5 19H9A1.5 1.5 0 0 0 7.5 20.5V25.3A1.5 1.5 0 0 0 9 26.8H17.5"/><path d="M13.4 22.9H17.5M10.9 22.9H11.9"/><path d="M17.5 30.7H9A1.5 1.5 0 0 0 7.5 32.2V37.3A1.5 1.5 0 0 0 9 38.8H17.5"/><path d="M13.4 34.6H17.5M10.9 34.6H11.9"/><rect x="21" y="17" width="20.2" height="23" fill="#fff" stroke="none"/><path d="M20.2 15.3H35.2L39.6 19.7V37.1A1.5 1.5 0 0 1 38.1 38.6H20.2A1.5 1.5 0 0 1 18.7 37.1V16.8A1.5 1.5 0 0 1 20.2 15.3Z" fill="#fff" stroke-width="1.7"/><path d="M35.2 15.3V19.7H39.6Z" fill="#101313" stroke-width="1"/><path d="M23.2 21.6H30.5M23.2 25.6H35.4"/><path d="M23.2 29.4H35.4M23.2 33.1H35.4" stroke="#555" stroke-width="1.8"/></svg></div></div><div style="position:absolute;left:116.8px;top:7px;width:1.4px;height:20.6px;background:#313d47"></div></div><span class="t b" style="left:170.2px;top:886.9px;font-size:16.74px;font-weight:700;color:#e1e5e9;transform:scaleX(0.9076);">File URL</span><span class="t" style="left:246.2px;top:886.9px;font-size:16.74px;font-weight:400;color:#9ba6af;transform:scaleX(0.9341);">Step 2</span><div style="position:absolute;left:1433.6px;top:906.4px;width:14.0px;height:14.0px;"><svg viewBox="0 0 14 14" width="14" height="14"><path d="M1 13L13 1M7.4 13L13 7.4" stroke="#9c9c9c" stroke-width="1.3" fill="none"/></svg></div><span class="t" style="left:37.2px;top:944.4px;font-size:19.53px;font-weight:400;color:#8b98a3;transform:scaleX(0.9627);">Export the CSV file to this URL.</span><span class="t" style="left:305.0px;top:944.4px;font-size:19.53px;font-weight:400;color:#8b98a3;transform:scaleX(1.0132);">Use the output of</span><span class="t b" style="left:460.6px;top:944.4px;font-size:19.53px;font-weight:700;color:#8b98a3;transform:scaleX(0.9585);">Generate on-prem file URL</span><span class="t" style="left:703.0px;top:944.4px;font-size:19.53px;font-weight:400;color:#8b98a3;transform:scaleX(0.9681);">or an S3 presigned URL</span><span class="t" style="left:910.0px;top:944.4px;font-size:19.53px;font-weight:400;color:#8b98a3;transform:scaleX(1.0069);">(with PUT method).</span></div></div>
<div class="foot"></div>
<svg class="win-corners" style="position:absolute;left:0;top:1580px" width="3006" height="8" viewBox="0 1580 3006 8"><path d="M0 1583.4Q3.6 1586.6 7.6 1588L0 1588Z" fill="#000"/><path d="M0 1582.8Q3.8 1586 8 1587.4" stroke="#5f939c" stroke-width="1" fill="none"/><path d="M3006 1583.4Q3002.4 1586.6 2998 1588L3006 1588Z" fill="#000"/><path d="M3006 1582.8Q3002.2 1586 2997.6 1587.4" stroke="#5f939c" stroke-width="1" fill="none"/></svg>
</body></html>
